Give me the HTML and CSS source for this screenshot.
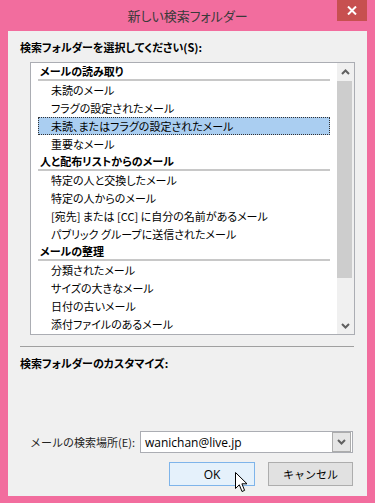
FILE: index.html
```html
<!DOCTYPE html>
<html lang="ja">
<head>
  <meta charset="UTF-8" />
  <title>新しい検索フォルダー</title>
  <link rel="stylesheet" href="styles.css">
</head>
<body>
  <div class="window">
    <div class="titlebar">
      <span></span>
      <span class="title">新しい検索フォルダー</span>
      <span class="close">
        <svg width="10" height="9" viewBox="0 0 10 9"><path d="M1 0.5 L9 8.5 M9 0.5 L1 8.5" stroke="#fff" stroke-width="2"/></svg>
      </span>
    </div>

    <div class="client">
      <div class="caption">検索フォルダーを選択してください(S):</div>

      <div class="listbox">
        <ul class="items">
          <li class="group">メールの読み取り</li>
          <li>未読のメール</li>
          <li>フラグの設定されたメール</li>
          <li class="selected">未読、またはフラグの設定されたメール</li>
          <li>重要なメール</li>
          <li class="group">人と配布リストからのメール</li>
          <li>特定の人と交換したメール</li>
          <li>特定の人からのメール</li>
          <li>[宛先] または [CC] に自分の名前があるメール</li>
          <li>パブリック グループに送信されたメール</li>
          <li class="group">メールの整理</li>
          <li>分類されたメール</li>
          <li>サイズの大きなメール</li>
          <li>日付の古いメール</li>
          <li>添付ファイルのあるメール</li>
        </ul>
        <div class="scrollbar">
          <div class="arrow">
            <svg width="9" height="6" viewBox="0 0 9 6"><path d="M1 5 L4.5 1.5 L8 5" fill="none" stroke="#606060" stroke-width="2"/></svg>
          </div>
          <div class="track"><div class="thumb"></div></div>
          <div class="arrow">
            <svg width="9" height="6" viewBox="0 0 9 6"><path d="M1 1 L4.5 4.5 L8 1" fill="none" stroke="#606060" stroke-width="2"/></svg>
          </div>
        </div>
      </div>

      <hr class="sep">
      <div class="caption">検索フォルダーのカスタマイズ:</div>

      <div class="search-row">
        <span>メールの検索場所(E):</span>
        <div class="combo">
          <span class="value">wanichan@live.jp</span>
          <span class="drop">
            <svg width="9" height="6" viewBox="0 0 9 6"><path d="M1 1 L4.5 4.5 L8 1" fill="none" stroke="#606060" stroke-width="2"/></svg>
          </span>
        </div>
      </div>

      <div class="buttons">
        <button class="btn default">OK</button>
        <button class="btn">キャンセル</button>
      </div>
    </div>
  </div>

  <svg class="cursor" width="13" height="21" viewBox="0 0 13 21">
    <path d="M0.5 0.5 L0.5 16.5 L4.3 12.8 L7 19.5 L9.6 18.4 L6.9 11.8 L12 11.8 Z" fill="#fff" stroke="#000" stroke-width="1"/>
  </svg>
</body>
</html>
```

FILE: styles.css
```css
body {
  margin: 0;
  position: relative;
  font-family: "Noto Sans CJK JP", sans-serif;
  font-size: 11px;
  color: #000;
  background: #f26d9e;
}

.window {
  width: 375px;
  height: 503px;
  box-sizing: border-box;
  padding: 0 8px 7px;
  background: #f26d9e;
  display: flex;
  flex-direction: column;
}

.titlebar {
  height: 31px;
  display: grid;
  grid-template-columns: 30px 1fr 30px;
}

.title {
  align-self: center;
  text-align: center;
  font-size: 13px;
  color: #3a3a3a;
  font-feature-settings: "palt";
  margin-top: -1px;
}

.close {
  height: 21px;
  background: #c75050;
  display: flex;
  align-items: center;
  justify-content: center;
}

.client {
  flex: 1;
  background: #f0f0f0;
  padding: 8px 14px 10px 12px;
  display: flex;
  flex-direction: column;
}

.caption {
  font-weight: bold;
  line-height: 16px;
  font-feature-settings: "palt";
}

.listbox {
  margin: 7px 0 0 10px;
  width: 325px;
  height: 273px;
  box-sizing: border-box;
  border: 1px solid #abadb3;
  background: #fff;
  display: flex;
}

.items {
  flex: 1;
  list-style: none;
  margin: 0;
  padding: 0 7px;
  font-feature-settings: "palt";
}

.items li {
  height: 18px;
  line-height: 18px;
  padding-left: 13px;
  box-sizing: border-box;
  white-space: nowrap;
}

.items li.group {
  font-weight: bold;
  padding: 1px 0 0 2px;
  line-height: 15px;
  border-bottom: 2px solid #c8c8c8;
}

.items li.selected {
  background: #aacef1;
  outline: 1px dotted #333;
  outline-offset: -1px;
}

.scrollbar {
  width: 17px;
  background: #f0f0f0;
  display: flex;
  flex-direction: column;
}

.arrow {
  height: 17px;
  display: flex;
  align-items: center;
  justify-content: center;
}

.track {
  flex: 1;
}

.thumb {
  margin: 1px 2px 0 0;
  height: 197px;
  background: #cdcdcd;
}

.sep {
  margin: 11px 0 0;
  width: 334px;
  border: 0;
  border-top: 1px solid #a0a0a0;
}

.sep + .caption {
  margin-top: 8px;
}

.search-row {
  margin-top: auto;
  padding-left: 10px;
  display: flex;
  align-items: center;
  gap: 5px;
  color: #222;
}

.combo {
  width: 213px;
  height: 22px;
  box-sizing: border-box;
  border: 1px solid #abadb3;
  background: #fff;
  display: flex;
  align-items: center;
  justify-content: space-between;
}

.value {
  padding-left: 4px;
  font-family: "Open Sans", sans-serif;
  font-size: 12px;
  color: #000;
}

.drop {
  width: 17px;
  height: 18px;
  margin-right: 1px;
  border: 1px solid #acacac;
  background: #e5e5e5;
  display: flex;
  align-items: center;
  justify-content: center;
}

.buttons {
  margin-top: 9px;
  display: flex;
  justify-content: flex-end;
  gap: 13px;
}

.btn {
  width: 85px;
  height: 24px;
  padding: 0;
  font-family: "Noto Sans CJK JP", sans-serif;
  font-size: 11px;
  color: #000;
  background: #e1e1e1;
  border: 1px solid #adadad;
}

.btn.default {
  width: 86px;
  background: #e5f1fb;
  border-color: #7eb4ea;
  font-family: "Open Sans", sans-serif;
  font-size: 12px;
}

.cursor {
  position: absolute;
  left: 235px;
  top: 472px;
}
```
